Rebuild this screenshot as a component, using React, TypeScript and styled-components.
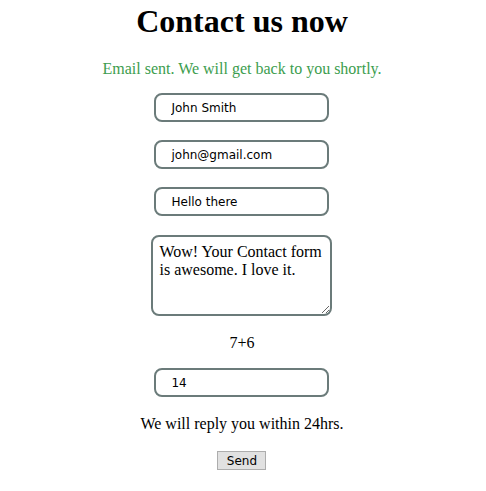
import React from "react";
import styled, { createGlobalStyle } from "styled-components";

const Global = createGlobalStyle`
  html, body { margin: 0; padding: 0; background: #fff; }
  body { font-family: "Liberation Serif", "Times New Roman", serif; color: #000; }
`;

const Page = styled.div`
  box-sizing: border-box;
  width: 486px;
  padding-right: 2px;
  display: flex;
  flex-direction: column;
  align-items: center;
`;

const Title = styled.h1`
  margin: 3px 0 0;
  font-size: 32px;
  line-height: 37px;
  font-weight: bold;
`;

const Status = styled.p`
  margin: 20px 0 0;
  font-size: 16px;
  line-height: 18px;
  color: #3c9d4e;
`;

const Form = styled.form`
  display: flex;
  flex-direction: column;
  align-items: center;
  margin-top: 15px;
`;

const Field = styled.input<{ $top?: number }>`
  box-sizing: border-box;
  width: 175px;
  height: 29px;
  margin-top: ${(p) => p.$top ?? 18}px;
  padding: 1px 15px 0;
  border: 2px solid #6b7b7a;
  border-radius: 8px;
  font-family: "DejaVu Sans", Tahoma, sans-serif;
  font-size: 12px;
  color: #000;
  background: #fff;
  outline: none;
`;

const Message = styled.textarea`
  box-sizing: border-box;
  width: 181px;
  height: 81px;
  margin-top: 19px;
  padding: 6px 6px;
  border: 2px solid #6b7b7a;
  border-radius: 8px;
  font-family: "Liberation Serif", "Times New Roman", serif;
  font-size: 16px;
  line-height: 18px;
  color: #000;
  outline: none;
`;

const Line = styled.div<{ $top: number }>`
  margin-top: ${(p) => p.$top}px;
  font-size: 16px;
  line-height: 18px;
`;

const Send = styled.button`
  margin-top: 18px;
  width: 49px;
  height: 19px;
  padding: 0;
  background: #e1e1e1;
  border: 1px solid #adadad;
  border-radius: 0;
  font-family: "DejaVu Sans", Tahoma, sans-serif;
  font-size: 12px;
  color: #000;
`;

export default function App() {
  return (
    <Page>
      <Global />
      <Title>Contact us now</Title>
      <Status>Email sent. We will get back to you shortly.</Status>
      <Form onSubmit={(e) => e.preventDefault()}>
        <Field $top={0} defaultValue="John Smith" />
        <Field defaultValue="john@gmail.com" />
        <Field defaultValue="Hello there" />
        <Message defaultValue="Wow! Your Contact form is awesome. I love it." />
        <Line $top={18}>7+6</Line>
        <Field $top={16} defaultValue="14" />
        <Line $top={18}>We will reply you within 24hrs.</Line>
        <Send type="submit">Send</Send>
      </Form>
    </Page>
  );
}
